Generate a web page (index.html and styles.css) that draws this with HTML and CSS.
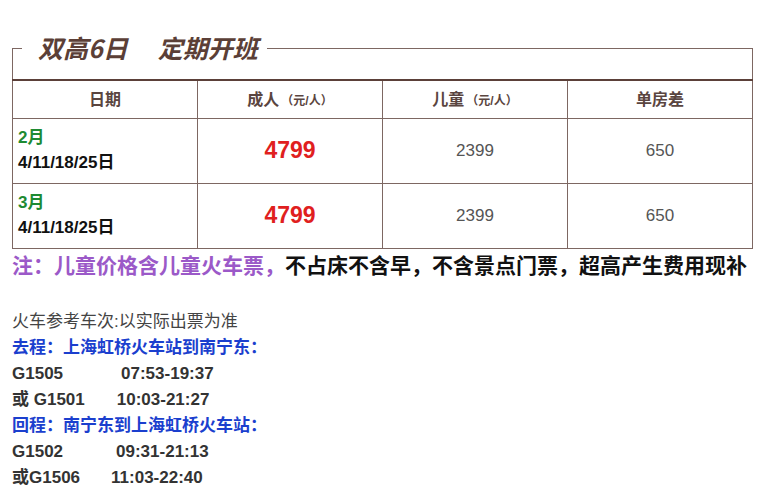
FILE: index.html
```html
<!DOCTYPE html>
<html lang="zh-CN">
<head>
<meta charset="utf-8">
<title>双高6日 定期开班</title>
<link rel="stylesheet" href="styles.css">
</head>
<body>
<div class="page">
  <div class="card">
    <div class="cap">
      <span class="cap-l"></span>
      <h1 class="title">双高6日<span class="gap"></span>定期开班</h1>
      <span class="cap-r"></span>
    </div>
    <table class="price">
      <thead>
        <tr>
          <th>日期</th>
          <th>成人<small>（元/人）</small></th>
          <th>儿童<small>（元/人）</small></th>
          <th>单房差</th>
        </tr>
      </thead>
      <tbody>
        <tr>
          <td class="date"><div class="mon">2月</div><div class="days">4/11/18/25日</div></td>
          <td class="adult">4799</td>
          <td class="num">2399</td>
          <td class="num">650</td>
        </tr>
        <tr>
          <td class="date"><div class="mon">3月</div><div class="days">4/11/18/25日</div></td>
          <td class="adult">4799</td>
          <td class="num">2399</td>
          <td class="num">650</td>
        </tr>
      </tbody>
    </table>
  </div>
  <p class="note"><span class="purple">注：儿童价格含儿童火车票，</span>不占床不含早，不含景点门票，超高产生费用现补</p>
  <div class="train">
    <div class="ref">火车参考车次:以实际出票为准</div>
    <div class="leg">去程：上海虹桥火车站到南宁东：</div>
    <div class="run"><span>G1505</span><span class="t t1">07:53-19:37</span></div>
    <div class="run"><span>或 G1501</span><span class="t t2">10:03-21:27</span></div>
    <div class="leg">回程：南宁东到上海虹桥火车站：</div>
    <div class="run"><span>G1502</span><span class="t t3">09:31-21:13</span></div>
    <div class="run"><span>或G1506</span><span class="t t4">11:03-22:40</span></div>
  </div>
</div>
</body>
</html>
```
FILE: styles.css
```css
* { box-sizing: border-box; }
html, body { margin: 0; padding: 0; background: #fff; }
body {
  font-family: "Liberation Sans", "Noto Sans CJK SC", sans-serif;
  color: #222;
}
.page {
  padding: 48px 11px 0 12px;
  width: 764px;
}
.card { width: 741px; }
.cap {
  display: flex;
  height: 31px;
}
.cap-l {
  width: 10px;
  border-top: 1px solid #7d6762;
  border-left: 1px solid #7d6762;
}
.cap-r {
  flex: 1;
  border-top: 1px solid #7d6762;
  border-right: 1px solid #7d6762;
}
.title {
  margin: -14px 0 0;
  padding: 0 9px 0 16px;
  height: 26px;
  line-height: 26px;
  font-size: 25px;
  font-weight: 700;
  font-style: italic;
  color: #5b3f37;
  font-family: "Noto Sans CJK SC", sans-serif;
  white-space: nowrap;
}
.gap { display: inline-block; width: 30px; }
.price {
  width: 741px;
  border-collapse: collapse;
  table-layout: fixed;
}
.price th {
  height: 38px;
  border: 1px solid #7d6762;
  border-top: 2px solid #5b4039;
  font-size: 16px;
  font-weight: 700;
  color: #5a4540;
  text-align: center;
  vertical-align: middle;
  padding: 0 0 2px;
}
.price th small {
  font-size: 12px;
  font-weight: 700;
  margin-left: 2px;
}
.price td {
  height: 65px;
  border: 1px solid #7d6762;
  text-align: center;
  vertical-align: middle;
  padding: 0;
}
.price td.date {
  text-align: left;
  padding: 0 0 2px 5px;
  font-weight: 700;
  font-size: 17px;
  line-height: 25px;
}
.mon { color: #1e8a32; }
.days { color: #111; }
.adult {
  color: #e0201e;
  font-size: 23px;
  font-weight: 700;
}
.num {
  color: #555;
  font-size: 17px;
}
.note {
  margin: 0;
  line-height: 30px;
  font-size: 21px;
  font-weight: 700;
  color: #111;
  white-space: nowrap;
  font-family: "Noto Sans CJK SC", sans-serif;
}
.purple { color: #9b59c8; }
.train {
  margin-top: 30px;
  font-size: 17px;
  line-height: 26px;
}
.ref { color: #444; }
.leg { color: #1b3fce; font-weight: 700; }
.run { color: #333; font-weight: 700; white-space: nowrap; }
.t1 { margin-left: 58px; }
.t2 { margin-left: 32px; }
.t3 { margin-left: 53px; }
.t4 { margin-left: 31px; }
```
